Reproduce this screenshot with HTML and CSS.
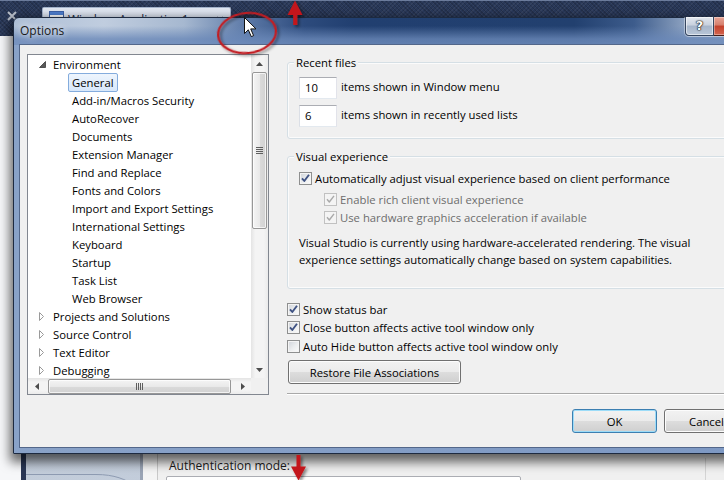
FILE: index.html
```html
<!DOCTYPE html>
<html>
<head>
<meta charset="utf-8">
<title>Options</title>
<link rel="stylesheet" href="styles.css">
</head>
<body>
<div class="ide">
  <header class="ide-top">
    <svg class="doc-close" width="10" height="10" viewBox="0 0 10 10"><path d="M1 1L9 9M9 1L1 9"/></svg>
    <div class="doc-tab">
      <svg class="doc-icon" width="15" height="13" viewBox="0 0 15 13"><rect x="0.5" y="0.5" width="14" height="12" fill="#fff" stroke="#3d62a8"/><rect x="1" y="1" width="13" height="3" fill="#4f7fd0"/></svg>
      <span class="doc-name">WindowsApplication1</span>
      <svg class="doc-x" width="8" height="8" viewBox="0 0 8 8"><path d="M1 1L7 7M7 1L1 7"/></svg>
    </div>
  </header>
  <div class="ide-body">
    <div class="toolbox"></div>
    <div class="splitter"></div>
    <div class="side">
      <svg class="side-tab" width="114" height="28" viewBox="0 0 114 28"><path d="M0 4.5H70C88 4.5 100 9 110.5 17V28" fill="none" stroke="#8e9bb2"/></svg>
    </div>
    <div class="side-edge"></div>
    <div class="content">
      <div class="auth">
        <div class="auth-label">Authentication mode:</div>
        <div class="auth-field"></div>
      </div>
    </div>
  </div>
</div>

<div class="dialog">
  <div class="titlebar">
    <span class="title">Options</span>
    <div class="caption">
      <span class="cap-help">?</span>
      <span class="cap-close"></span>
    </div>
  </div>
  <div class="client">
    <div class="main">
      <div class="tree">
        <div class="tree-list">
          <div class="node l0"><span class="exp"><svg width="7" height="7" viewBox="0 0 7 7"><polygon points="6.5,0.5 6.5,6.5 0.5,6.5" fill="#595959" stroke="#3a3a3a" stroke-width="0.8"/></svg></span><span class="lbl">Environment</span></div>
          <div class="node l1"><span class="lbl sel">General</span></div>
          <div class="node l1"><span class="lbl">Add-in/Macros Security</span></div>
          <div class="node l1"><span class="lbl">AutoRecover</span></div>
          <div class="node l1"><span class="lbl">Documents</span></div>
          <div class="node l1"><span class="lbl">Extension Manager</span></div>
          <div class="node l1"><span class="lbl">Find and Replace</span></div>
          <div class="node l1"><span class="lbl">Fonts and Colors</span></div>
          <div class="node l1"><span class="lbl">Import and Export Settings</span></div>
          <div class="node l1"><span class="lbl">International Settings</span></div>
          <div class="node l1"><span class="lbl">Keyboard</span></div>
          <div class="node l1"><span class="lbl">Startup</span></div>
          <div class="node l1"><span class="lbl">Task List</span></div>
          <div class="node l1"><span class="lbl">Web Browser</span></div>
          <div class="node l0"><span class="exp"><svg width="6" height="9" viewBox="0 0 6 9"><polygon points="0.5,0.5 4.5,4.5 0.5,8.5" fill="#fff" stroke="#9a9a9a"/></svg></span><span class="lbl">Projects and Solutions</span></div>
          <div class="node l0"><span class="exp"><svg width="6" height="9" viewBox="0 0 6 9"><polygon points="0.5,0.5 4.5,4.5 0.5,8.5" fill="#fff" stroke="#9a9a9a"/></svg></span><span class="lbl">Source Control</span></div>
          <div class="node l0"><span class="exp"><svg width="6" height="9" viewBox="0 0 6 9"><polygon points="0.5,0.5 4.5,4.5 0.5,8.5" fill="#fff" stroke="#9a9a9a"/></svg></span><span class="lbl">Text Editor</span></div>
          <div class="node l0"><span class="exp"><svg width="6" height="9" viewBox="0 0 6 9"><polygon points="0.5,0.5 4.5,4.5 0.5,8.5" fill="#fff" stroke="#9a9a9a"/></svg></span><span class="lbl">Debugging</span></div>
        </div>
        <div class="vscroll">
          <span class="sb-btn"><svg width="7" height="4" viewBox="0 0 7 4"><polygon points="3.5,0 7,4 0,4" fill="#4d4d4d"/></svg></span>
          <span class="vthumb"><span class="vgrip"></span></span>
          <span class="sb-space"></span>
          <span class="sb-btn"><svg width="7" height="4" viewBox="0 0 7 4"><polygon points="0,0 7,0 3.5,4" fill="#4d4d4d"/></svg></span>
        </div>
        <div class="hscroll">
          <span class="sb-hbtn"><svg width="4" height="7" viewBox="0 0 4 7"><polygon points="4,0 4,7 0,3.5" fill="#4d4d4d"/></svg></span>
          <span class="hthumb"><span class="hgrip"></span></span>
          <span class="sb-space"></span>
          <span class="sb-hbtn"><svg width="4" height="7" viewBox="0 0 4 7"><polygon points="0,0 4,3.5 0,7" fill="#4d4d4d"/></svg></span>
        </div>
        <div class="corner"></div>
      </div>

      <div class="pane">
        <div class="group g-recent">
          <div class="gtitle">Recent files</div>
          <div class="numrow first"><span class="num">10</span><span class="numlbl">items shown in Window menu</span></div>
          <div class="numrow"><span class="num">6</span><span class="numlbl">items shown in recently used lists</span></div>
        </div>
        <div class="group g-visual">
          <div class="gtitle">Visual experience</div>
          <div class="check r1"><span class="cb"><svg width="11" height="11" viewBox="0 0 11 11"><path d="M2 5.3L4.3 8 9 1.8"/></svg></span><span>Automatically adjust visual experience based on client performance</span></div>
          <div class="check sub r2 disabled"><span class="cb"><svg width="11" height="11" viewBox="0 0 11 11"><path d="M2 5.3L4.3 8 9 1.8"/></svg></span><span>Enable rich client visual experience</span></div>
          <div class="check sub r3 disabled"><span class="cb"><svg width="11" height="11" viewBox="0 0 11 11"><path d="M2 5.3L4.3 8 9 1.8"/></svg></span><span>Use hardware graphics acceleration if available</span></div>
          <p class="note">Visual Studio is currently using hardware-accelerated rendering. The visual<br>experience settings automatically change based on system capabilities.</p>
        </div>
        <div class="check low first"><span class="cb"><svg width="11" height="11" viewBox="0 0 11 11"><path d="M2 5.3L4.3 8 9 1.8"/></svg></span><span>Show status bar</span></div>
        <div class="check low"><span class="cb"><svg width="11" height="11" viewBox="0 0 11 11"><path d="M2 5.3L4.3 8 9 1.8"/></svg></span><span>Close button affects active tool window only</span></div>
        <div class="check low third"><span class="cb"></span><span>Auto Hide button affects active tool window only</span></div>
        <button class="btn restore">Restore File Associations</button>
        <div class="sep"></div>
      </div>
    </div>
    <div class="footer">
      <button class="btn default">OK</button>
      <button class="btn">Cancel</button>
    </div>
  </div>
</div>

<svg class="annot" width="724" height="480" viewBox="0 0 724 480">
  <defs>
    <filter id="sh" x="-30%" y="-30%" width="160%" height="160%">
      <feDropShadow dx="2" dy="2" stdDeviation="1.5" flood-color="#000" flood-opacity="0.45"/>
    </filter>
  </defs>
  <ellipse cx="247" cy="33" rx="29" ry="20" fill="none" stroke="#c21f24" stroke-width="2.2" transform="rotate(-6 247 33)" filter="url(#sh)"/>
  <g fill="#c3161b" filter="url(#sh)">
    <path d="M295 0.5L302.5 15H297.3V25H293.2V15H287.5Z"/>
    <path d="M296.5 455H300.5V466.5H306L298.5 480.5L291 466.5H296.5Z"/>
  </g>
  <path d="M244.5 17.5V33.5L248.3 29.8L251.3 36.6L253.6 35.6L250.7 28.9H256Z" fill="#fff" stroke="#111" stroke-width="1" stroke-linejoin="round"/>
</svg>
</body>
</html>
```
FILE: styles.css
```css
* { box-sizing: border-box; margin: 0; padding: 0; }
html, body { width: 724px; height: 480px; overflow: hidden; }
body {
  position: relative;
  font-family: "Segoe UI", "Open Sans", "Noto Sans", sans-serif;
  font-size: 11.3px;
  color: #000;
  background: #293756;
}

/* ---------- IDE behind the dialog ---------- */
.ide { width: 724px; height: 480px; display: flex; flex-direction: column; }
.ide-top {
  height: 36px; flex: none;
  display: flex; align-items: flex-start;
  padding-left: 7px;
  border-top: 1px solid #6b7b9b;
  background-color: #293858;
  background-image:
    repeating-linear-gradient(45deg, rgba(0,0,0,.16) 0 1px, transparent 1px 3px),
    repeating-linear-gradient(-45deg, rgba(255,255,255,.05) 0 1px, transparent 1px 3px);
}
.doc-close { margin-top: 10px; flex: none; }
.doc-close path { stroke: #b9bfca; stroke-width: 2; }
.doc-tab {
  margin-left: 25px; margin-top: 6px;
  width: 189px; height: 30px;
  display: flex; align-items: flex-start; gap: 4px;
  padding: 3px 6px 0 6px;
  border: 1px solid #a4b3cb; border-bottom: 0;
  border-radius: 2px 2px 0 0;
  background: linear-gradient(#e2e8f3, #c9d4e6);
  font-size: 12px; color: #1c2a44;
}
.doc-icon { flex: none; }
.doc-name { line-height: 16px; margin-top: 1px; }
.doc-x { margin-left: auto; margin-top: 5px; }
.doc-x path { stroke: #4a5670; stroke-width: 1.4; }

.ide-body { flex: 1; display: flex; }
.toolbox { width: 21px; background: #f6f7f9; }
.splitter { width: 5px; background: #2a3756; }
.side {
  width: 114px; background: linear-gradient(#cbd3e0, #c2ccda);
  display: flex; flex-direction: column; justify-content: flex-end;
}
.side-tab { display: block; }
.side-edge { width: 18px; border-left: 3px solid #9aa4b5; border-right: 1px solid #c9c9c9; background: #f4f4f4; }
.content { flex: 1; background: #f0f0f0; padding: 422px 0 0 8px; }
.auth { width: 540px; border-right: 1px solid #d4d4d4; height: 100%; }
.auth-label { font-size: 12px; line-height: 16px; color: #1b1b1b; padding-left: 3px; }
.auth-field { margin-top: 2px; width: 355px; height: 22px; background: #fff; border: 1px solid #abadb3; border-radius: 2px; }

/* ---------- Dialog ---------- */
.dialog {
  position: absolute; left: 13px; top: 17px;
  width: 750px; height: 437px;
  display: flex; flex-direction: column;
  padding: 0 5px 5px;
  border: 1px solid #1d2a40;
  border-radius: 6px 6px 0 0;
  background:
    linear-gradient(to bottom, rgba(108,138,186,0) 0, rgba(108,138,186,0) 8px, rgba(106,136,184,.8) 21px, rgba(110,140,188,.85) 27px) 0 0 / 100% 27px no-repeat,
    linear-gradient(to right, #aebfd6 0, #c0cddf 90px, #a6b8d0 170px, #5d7aa8 232px, #2d4b7d 290px, #213f70 340px, #22406f 560px, #3d5c8c 620px, #8ea3c1 672px, #abbacd 750px) 0 0 / 100% 27px no-repeat,
    linear-gradient(to right, #89a2c8, #7d98c3);
  box-shadow: 0 5px 11px 3px rgba(0,0,0,.6);
}
.titlebar {
  height: 26px; flex: none;
  display: flex; align-items: flex-start;
  padding-left: 1px;
}
.title {
  font-size: 12px; line-height: 26px; color: #1a1a1a;
  text-shadow: 0 0 6px rgba(255,255,255,.9), 0 0 10px rgba(255,255,255,.6);
}
.caption {
  margin-left: auto; margin-top: -1px;
  display: flex; height: 19px;
  border-radius: 0 0 4px 4px;
  box-shadow: 0 1px 0 rgba(255,255,255,.45), -1px 0 0 rgba(255,255,255,.35);
}
.cap-help {
  width: 29px; height: 19px;
  border: 1px solid #364660; border-top: 0;
  border-radius: 0 0 0 4px;
  background: linear-gradient(#e3e8ef 0%, #c8d1de 45%, #a6b5ca 50%, #b9c6d8 100%);
  box-shadow: inset 0 0 0 1px rgba(255,255,255,.55);
  color: #fff; font: bold 13px "DejaVu Sans", sans-serif; line-height: 18px; text-align: center;
  text-shadow: 0 0 1px #000, 0 0 1px #000, 0 0 2px #222;
}
.cap-close {
  width: 43px; height: 19px;
  border: 1px solid #4a1a12; border-top: 0; border-left: 0;
  border-radius: 0 0 4px 0;
  background: linear-gradient(#e8a596 0%, #d57e6c 45%, #c2402b 50%, #d4654f 100%);
  box-shadow: inset 0 0 0 1px rgba(255,255,255,.35);
}

.client {
  flex: 1;
  background: #f0f0f0;
  border: 1px solid #53678a;
  display: flex; flex-direction: column;
}
.main { display: flex; align-items: flex-start; gap: 18px; padding: 9px 10px 0 7px; }

/* tree */
.tree {
  width: 242px; height: 341px; flex: none;
  border: 1px solid #828790;
  background: #fff;
  display: grid;
  grid-template-columns: 223px 17px;
  grid-template-rows: 323px 16px;
}
.tree-list { overflow: hidden; }
.node { height: 18px; display: flex; align-items: center; white-space: nowrap; }
.l0 { padding-left: 11px; }
.l1 { padding-left: 40px; }
.exp { width: 10px; flex: none; display: flex; align-items: center; }
.exp svg { display: block; }
.lbl { border: 1px solid transparent; padding: 0 3px; line-height: 17px; border-radius: 2px; }
.lbl.sel { border-color: #84acdd; background: linear-gradient(#eef5fd, #d7e7fa); }

.vscroll {
  display: flex; flex-direction: column; align-items: center;
  background: linear-gradient(to right, #e4e4e4, #f4f4f4 25%, #f4f4f4 75%, #ebebeb);
}
.sb-btn { width: 17px; height: 17px; flex: none; display: flex; align-items: center; justify-content: center; }
.sb-space { flex: 1; }
.vthumb {
  width: 15px; height: 157px; flex: none;
  border: 1px solid #979797; border-radius: 2px;
  background: linear-gradient(to right, #f4f4f4, #e9e9e9 50%, #dadada 51%, #d2d2d2);
  box-shadow: inset 0 0 0 1px rgba(255,255,255,.7);
  display: flex; align-items: center; justify-content: center;
}
.vgrip { width: 7px; height: 7px; background: repeating-linear-gradient(to bottom, #5e5e5e 0 1px, transparent 1px 2px); }
.hscroll {
  display: flex; align-items: center;
  background: linear-gradient(to bottom, #e4e4e4, #f4f4f4 25%, #f4f4f4 75%, #ebebeb);
}
.sb-hbtn { width: 17px; height: 16px; flex: none; display: flex; align-items: center; justify-content: center; }
.hthumb {
  margin-left: 3px;
  width: 183px; height: 15px; flex: none;
  border: 1px solid #979797; border-radius: 2px;
  background: linear-gradient(to bottom, #f4f4f4, #e9e9e9 50%, #dadada 51%, #d2d2d2);
  box-shadow: inset 0 0 0 1px rgba(255,255,255,.7);
  display: flex; align-items: center; justify-content: center;
}
.hgrip { width: 7px; height: 7px; background: repeating-linear-gradient(to right, #5e5e5e 0 1px, transparent 1px 2px); }
.corner { background: #f0f0f0; }

/* right pane */
.pane { flex: 1; display: flex; flex-direction: column; align-items: flex-start; }
.group {
  align-self: stretch;
  display: flex; flex-direction: column; align-items: flex-start;
  border: 1px solid #d5dfe5; border-radius: 3px;
  box-shadow: inset 0 0 0 1px #fbfbfb;
  padding: 0 10px 0 11px;
}
.gtitle {
  margin: -8px 0 0 -5px; padding: 0 2px;
  line-height: 15px; background: #f0f0f0;
}
.g-recent { margin-top: 8px; padding-bottom: 11px; }
.g-visual { margin-top: 17px; padding-bottom: 20px; }
.numrow { display: flex; align-items: center; gap: 4px; margin-top: 6px; }
.numrow.first { margin-top: 7px; }
.numlbl { margin-bottom: 4px; }
.num {
  width: 38px; height: 22px;
  background: #fff;
  border: 1px solid; border-color: #abadb3 #e2e3ea #e3e9ef #dbdfe6;
  padding-left: 5px; line-height: 20px;
}
.check { display: flex; align-items: center; gap: 3px; height: 16px; white-space: nowrap; }
.check.r1 { margin-top: 6px; }
.check.r2 { margin-top: 5px; }
.check.r3 { margin-top: 2px; }
.check.sub { padding-left: 25px; }
.check.disabled { color: #6d6d6d; }
.cb {
  width: 13px; height: 13px; flex: none;
  border: 1px solid #8e8f8f;
  background: linear-gradient(135deg, #cfd3d9 0%, #eceeef 55%, #fbfbfb 100%);
  box-shadow: inset 0 0 0 1px #f4f4f4;
  display: flex; align-items: center; justify-content: center;
}
.cb svg { display: block; }
.cb path { fill: none; stroke: #3f5283; stroke-width: 1.9; stroke-linejoin: round; }
.disabled .cb { border-color: #c1c1c1; background: #f4f4f4; box-shadow: none; }
.disabled .cb path { stroke: #a9a9a9; stroke-width: 1.4; }
.note { margin-top: 9px; line-height: 17px; }
.check.low { height: 18px; }
.check.low.first { margin-top: 11px; }
.check.low.third { margin-top: 1px; }

.btn {
  height: 24px;
  border: 1px solid #707070; border-radius: 3px;
  background: linear-gradient(#f2f2f2 0%, #ebebeb 49%, #dddddd 50%, #cfcfcf 100%);
  box-shadow: inset 0 0 0 1px #fcfcfc;
  font: inherit; color: #000;
}
.restore { margin-top: 5px; margin-left: 1px; width: 173px; }
.sep {
  align-self: stretch;
  margin-top: 9px;
  height: 2px;
  border-top: 1px solid #a9a9a9;
  border-bottom: 1px solid #fff;
}
.footer { display: flex; justify-content: flex-end; gap: 7px; padding: 14px 7px 0 0; }
.footer .btn { width: 85px; }
.btn.default { border-color: #3c7fb1; box-shadow: inset 0 0 0 1px #9cdcf8; }

/* annotations */
.annot { position: absolute; left: 0; top: 0; pointer-events: none; }
```
